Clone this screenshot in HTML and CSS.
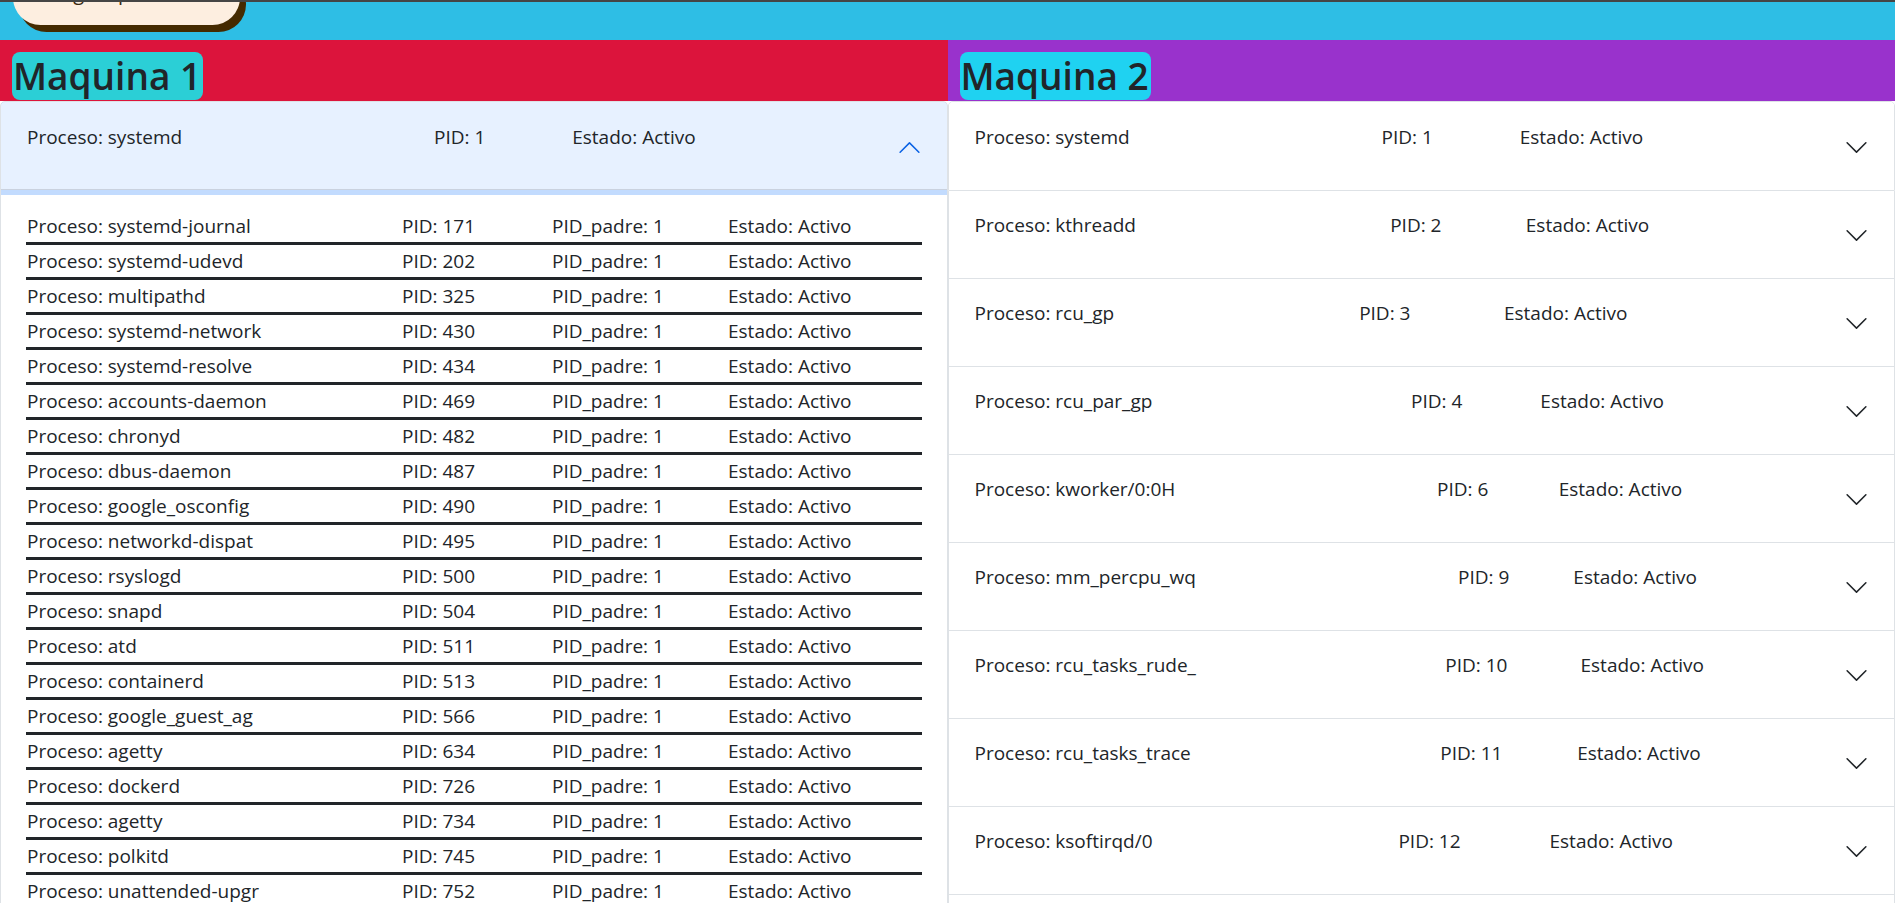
FILE: index.html
```html
<!DOCTYPE html>
<html lang="es">
<head>
<meta charset="utf-8">
<title>Monitor de procesos</title>
<link rel="stylesheet" href="styles.css">
</head>
<body>
<div class="topline"></div>
<header class="navbar">
  <a class="nav-btn" href="#">Log de procesos</a>
</header>
<main class="machines">
  <section class="machine machine-1">
    <h2 class="machine-title title-1">Maquina 1</h2>
    <div class="accordion">
      <div class="acc-item">
        <div class="acc-btn active">
          <table class="proc-head"><tr><td>Proceso: systemd</td><td>PID: 1</td><td>Estado: Activo</td></tr></table>
          <svg class="chev" viewBox="0 0 16 16"><path fill-rule="evenodd" d="M1.646 4.646a.5.5 0 0 1 .708 0L8 10.293l5.646-5.647a.5.5 0 0 1 .708.708l-6 6a.5.5 0 0 1-.708 0l-6-6a.5.5 0 0 1 0-.708z"/></svg>
        </div>
        <div class="acc-body">
          <table class="child-table">
            <colgroup><col class="col-name"><col class="col-pid"><col class="col-ppid"><col class="col-state"></colgroup>
            <tr><td>Proceso: systemd-journal</td><td>PID: 171</td><td>PID_padre: 1</td><td>Estado: Activo</td></tr>
            <tr><td>Proceso: systemd-udevd</td><td>PID: 202</td><td>PID_padre: 1</td><td>Estado: Activo</td></tr>
            <tr><td>Proceso: multipathd</td><td>PID: 325</td><td>PID_padre: 1</td><td>Estado: Activo</td></tr>
            <tr><td>Proceso: systemd-network</td><td>PID: 430</td><td>PID_padre: 1</td><td>Estado: Activo</td></tr>
            <tr><td>Proceso: systemd-resolve</td><td>PID: 434</td><td>PID_padre: 1</td><td>Estado: Activo</td></tr>
            <tr><td>Proceso: accounts-daemon</td><td>PID: 469</td><td>PID_padre: 1</td><td>Estado: Activo</td></tr>
            <tr><td>Proceso: chronyd</td><td>PID: 482</td><td>PID_padre: 1</td><td>Estado: Activo</td></tr>
            <tr><td>Proceso: dbus-daemon</td><td>PID: 487</td><td>PID_padre: 1</td><td>Estado: Activo</td></tr>
            <tr><td>Proceso: google_osconfig</td><td>PID: 490</td><td>PID_padre: 1</td><td>Estado: Activo</td></tr>
            <tr><td>Proceso: networkd-dispat</td><td>PID: 495</td><td>PID_padre: 1</td><td>Estado: Activo</td></tr>
            <tr><td>Proceso: rsyslogd</td><td>PID: 500</td><td>PID_padre: 1</td><td>Estado: Activo</td></tr>
            <tr><td>Proceso: snapd</td><td>PID: 504</td><td>PID_padre: 1</td><td>Estado: Activo</td></tr>
            <tr><td>Proceso: atd</td><td>PID: 511</td><td>PID_padre: 1</td><td>Estado: Activo</td></tr>
            <tr><td>Proceso: containerd</td><td>PID: 513</td><td>PID_padre: 1</td><td>Estado: Activo</td></tr>
            <tr><td>Proceso: google_guest_ag</td><td>PID: 566</td><td>PID_padre: 1</td><td>Estado: Activo</td></tr>
            <tr><td>Proceso: agetty</td><td>PID: 634</td><td>PID_padre: 1</td><td>Estado: Activo</td></tr>
            <tr><td>Proceso: dockerd</td><td>PID: 726</td><td>PID_padre: 1</td><td>Estado: Activo</td></tr>
            <tr><td>Proceso: agetty</td><td>PID: 734</td><td>PID_padre: 1</td><td>Estado: Activo</td></tr>
            <tr><td>Proceso: polkitd</td><td>PID: 745</td><td>PID_padre: 1</td><td>Estado: Activo</td></tr>
            <tr><td>Proceso: unattended-upgr</td><td>PID: 752</td><td>PID_padre: 1</td><td>Estado: Activo</td></tr>
          </table>
        </div>
      </div>
    </div>
  </section>

  <section class="machine machine-2">
    <h2 class="machine-title title-2">Maquina 2</h2>
    <div class="accordion">
      <div class="acc-item">
        <div class="acc-btn">
          <table class="proc-head"><tr><td>Proceso: systemd</td><td>PID: 1</td><td>Estado: Activo</td></tr></table>
          <svg class="chev" viewBox="0 0 16 16"><path fill-rule="evenodd" d="M1.646 4.646a.5.5 0 0 1 .708 0L8 10.293l5.646-5.647a.5.5 0 0 1 .708.708l-6 6a.5.5 0 0 1-.708 0l-6-6a.5.5 0 0 1 0-.708z"/></svg>
        </div>
      </div>
      <div class="acc-item">
        <div class="acc-btn">
          <table class="proc-head"><tr><td>Proceso: kthreadd</td><td>PID: 2</td><td>Estado: Activo</td></tr></table>
          <svg class="chev" viewBox="0 0 16 16"><path fill-rule="evenodd" d="M1.646 4.646a.5.5 0 0 1 .708 0L8 10.293l5.646-5.647a.5.5 0 0 1 .708.708l-6 6a.5.5 0 0 1-.708 0l-6-6a.5.5 0 0 1 0-.708z"/></svg>
        </div>
      </div>
      <div class="acc-item">
        <div class="acc-btn">
          <table class="proc-head"><tr><td>Proceso: rcu_gp</td><td>PID: 3</td><td>Estado: Activo</td></tr></table>
          <svg class="chev" viewBox="0 0 16 16"><path fill-rule="evenodd" d="M1.646 4.646a.5.5 0 0 1 .708 0L8 10.293l5.646-5.647a.5.5 0 0 1 .708.708l-6 6a.5.5 0 0 1-.708 0l-6-6a.5.5 0 0 1 0-.708z"/></svg>
        </div>
      </div>
      <div class="acc-item">
        <div class="acc-btn">
          <table class="proc-head"><tr><td>Proceso: rcu_par_gp</td><td>PID: 4</td><td>Estado: Activo</td></tr></table>
          <svg class="chev" viewBox="0 0 16 16"><path fill-rule="evenodd" d="M1.646 4.646a.5.5 0 0 1 .708 0L8 10.293l5.646-5.647a.5.5 0 0 1 .708.708l-6 6a.5.5 0 0 1-.708 0l-6-6a.5.5 0 0 1 0-.708z"/></svg>
        </div>
      </div>
      <div class="acc-item">
        <div class="acc-btn">
          <table class="proc-head"><tr><td>Proceso: kworker/0:0H</td><td>PID: 6</td><td>Estado: Activo</td></tr></table>
          <svg class="chev" viewBox="0 0 16 16"><path fill-rule="evenodd" d="M1.646 4.646a.5.5 0 0 1 .708 0L8 10.293l5.646-5.647a.5.5 0 0 1 .708.708l-6 6a.5.5 0 0 1-.708 0l-6-6a.5.5 0 0 1 0-.708z"/></svg>
        </div>
      </div>
      <div class="acc-item">
        <div class="acc-btn">
          <table class="proc-head"><tr><td>Proceso: mm_percpu_wq</td><td>PID: 9</td><td>Estado: Activo</td></tr></table>
          <svg class="chev" viewBox="0 0 16 16"><path fill-rule="evenodd" d="M1.646 4.646a.5.5 0 0 1 .708 0L8 10.293l5.646-5.647a.5.5 0 0 1 .708.708l-6 6a.5.5 0 0 1-.708 0l-6-6a.5.5 0 0 1 0-.708z"/></svg>
        </div>
      </div>
      <div class="acc-item">
        <div class="acc-btn">
          <table class="proc-head"><tr><td>Proceso: rcu_tasks_rude_</td><td>PID: 10</td><td>Estado: Activo</td></tr></table>
          <svg class="chev" viewBox="0 0 16 16"><path fill-rule="evenodd" d="M1.646 4.646a.5.5 0 0 1 .708 0L8 10.293l5.646-5.647a.5.5 0 0 1 .708.708l-6 6a.5.5 0 0 1-.708 0l-6-6a.5.5 0 0 1 0-.708z"/></svg>
        </div>
      </div>
      <div class="acc-item">
        <div class="acc-btn">
          <table class="proc-head"><tr><td>Proceso: rcu_tasks_trace</td><td>PID: 11</td><td>Estado: Activo</td></tr></table>
          <svg class="chev" viewBox="0 0 16 16"><path fill-rule="evenodd" d="M1.646 4.646a.5.5 0 0 1 .708 0L8 10.293l5.646-5.647a.5.5 0 0 1 .708.708l-6 6a.5.5 0 0 1-.708 0l-6-6a.5.5 0 0 1 0-.708z"/></svg>
        </div>
      </div>
      <div class="acc-item">
        <div class="acc-btn">
          <table class="proc-head"><tr><td>Proceso: ksoftirqd/0</td><td>PID: 12</td><td>Estado: Activo</td></tr></table>
          <svg class="chev" viewBox="0 0 16 16"><path fill-rule="evenodd" d="M1.646 4.646a.5.5 0 0 1 .708 0L8 10.293l5.646-5.647a.5.5 0 0 1 .708.708l-6 6a.5.5 0 0 1-.708 0l-6-6a.5.5 0 0 1 0-.708z"/></svg>
        </div>
      </div>
      <div class="acc-item">
        <div class="acc-btn">
          <table class="proc-head"><tr><td>Proceso: rcu_sched</td><td>PID: 13</td><td>Estado: Activo</td></tr></table>
          <svg class="chev" viewBox="0 0 16 16"><path fill-rule="evenodd" d="M1.646 4.646a.5.5 0 0 1 .708 0L8 10.293l5.646-5.647a.5.5 0 0 1 .708.708l-6 6a.5.5 0 0 1-.708 0l-6-6a.5.5 0 0 1 0-.708z"/></svg>
        </div>
      </div>
    </div>
  </section>
</main>
</body>
</html>
```

FILE: styles.css
```css
* { box-sizing: border-box; }

html, body {
  margin: 0;
  padding: 0;
  background: #ffffff;
}

body {
  font-family: "Segoe UI", "Open Sans", "Noto Sans", sans-serif;
  font-size: 19px;
  line-height: 30px;
  color: #212529;
  overflow: hidden;
}

.topline {
  height: 2px;
  background: #454545;
}

.navbar {
  height: 38px;
  background: #2ebee5;
  overflow: hidden;
}

.nav-btn {
  display: block;
  margin: -32px 0 0 13px;
  width: 227px;
  height: 55px;
  padding: 0;
  border-radius: 28px;
  background: #fdeee0;
  box-shadow: 6px 7px 0 #452a00;
  font-size: 20px;
  line-height: 46px;
  color: #3b2a10;
  text-align: center;
  text-decoration: none;
}

.machines {
  display: grid;
  grid-template-columns: 1fr 1fr;
  align-items: start;
}

.machine {
  min-width: 0;
  overflow: hidden;
  padding-top: 12px;
}

.machine-1 { background: #dc143c; }
.machine-2 { background: #9932cc; }

.machine-title {
  width: fit-content;
  margin: 0 0 1px 12px;
  padding: 0 2px 0 1px;
  font-size: 37px;
  line-height: 48px;
  font-weight: 600;
  color: #212529;
  border-radius: 8px;
}

.title-1 { background: #2bcfd6; }
.title-2 { background: #1fd2f1; }

.accordion {
  background: #ffffff;
}

.acc-item {
  background: #ffffff;
  border: 1px solid #dee2e6;
  overflow: hidden;
}

.acc-item:first-child {
  border-top-left-radius: 5px;
  border-top-right-radius: 5px;
}

.acc-item + .acc-item {
  border-top: 0;
}

.acc-btn {
  position: relative;
  display: flex;
  align-items: center;
  padding: 18px 25px 20px;
  background: #ffffff;
  color: #212529;
}

.acc-item:first-child .acc-btn {
  padding-top: 19px;
}

.acc-btn.active {
  z-index: 3;
  background: #e7f1ff;
  box-shadow: inset 0 -1px 0 rgba(0, 0, 0, 0.125), 0 0 0 5px rgba(13, 110, 253, 0.25);
}

.proc-head {
  flex: 1 1 auto;
  width: 100%;
  border-collapse: collapse;
  margin-bottom: 17px;
}

.proc-head td,
.child-table td {
  padding: 1px;
  white-space: nowrap;
  vertical-align: top;
}

.chev {
  flex: 0 0 25px;
  width: 25px;
  height: 25px;
  margin-top: 4px;
  fill: #212529;
}

.acc-btn.active .chev {
  fill: #0c63e4;
  transform: rotate(180deg);
}

.acc-body {
  padding: 20px 25px;
}

.child-table {
  width: 100%;
  table-layout: fixed;
  border-collapse: collapse;
}

.child-table tr {
  border-bottom: 3px solid #212529;
}

.col-name { width: 375px; }
.col-pid { width: 150px; }
.col-ppid { width: 176px; }
.col-state { width: auto; }
```
